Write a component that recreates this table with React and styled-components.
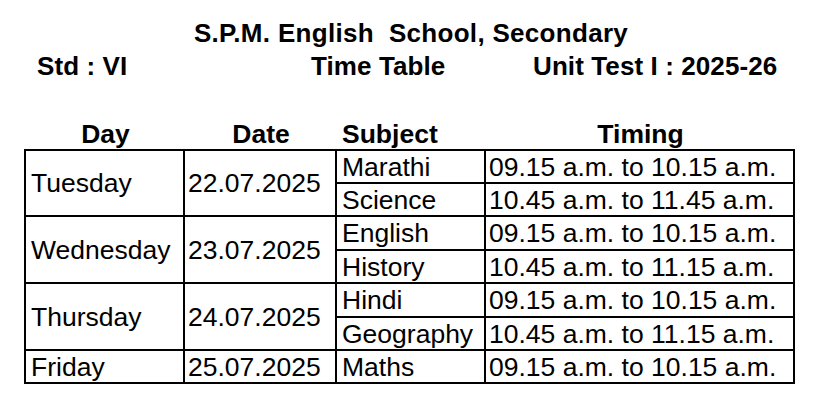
import React from "react";
import styled, { createGlobalStyle } from "styled-components";

const GlobalStyle = createGlobalStyle`
  html, body {
    margin: 0;
    padding: 0;
    background: #ffffff;
  }
  body {
    font-family: "Liberation Sans", Arial, sans-serif;
    color: #000000;
  }
`;

const Page = styled.div`
  width: 816px;
  height: 406px;
  padding-top: 18px;
  box-sizing: border-box;
  overflow: hidden;
`;

const Title = styled.h1`
  margin: 0;
  padding-left: 6px;
  font-size: 26px;
  line-height: 30px;
  font-weight: bold;
  letter-spacing: 0.3px;
  text-align: center;
  white-space: pre;
`;

const InfoLine = styled.div`
  display: grid;
  grid-template-columns: 274px 222px auto;
  margin-top: 3px;
  padding-left: 37px;
  font-size: 26px;
  line-height: 30px;
  font-weight: bold;
  letter-spacing: 0.1px;
  white-space: nowrap;
`;

const columns = "159px 152px 149px 309px";

const HeadRow = styled.div`
  display: grid;
  grid-template-columns: ${columns};
  margin: 38px 0 0 26px;
  font-size: 26.5px;
  line-height: 30px;
  font-weight: bold;
`;

const HeadCell = styled.div`
  text-align: ${(p) => p.$align || "center"};
  padding-left: ${(p) => (p.$align === "left" ? "5px" : "0")};
  white-space: nowrap;
`;

const Table = styled.div`
  display: grid;
  grid-template-columns: ${columns};
  grid-template-rows: 33px 33px 34px 33px 34px 33px 33px;
  margin-left: 24px;
  width: 771px;
  box-sizing: border-box;
  border-top: 2px solid #000;
  border-left: 2px solid #000;
  font-size: 26.5px;
  line-height: 30px;
`;

const Cell = styled.div`
  grid-column: ${(p) => p.$col};
  grid-row: span ${(p) => p.$span || 1};
  display: flex;
  align-items: center;
  box-sizing: border-box;
  padding-left: ${(p) => p.$pad}px;
  border-right: 2px solid #000;
  border-bottom: 2px solid #000;
  white-space: nowrap;
  overflow: hidden;
`;

const schedule = [
  {
    day: "Tuesday",
    date: "22.07.2025",
    papers: [
      ["Marathi", "09.15 a.m. to 10.15 a.m."],
      ["Science", "10.45 a.m. to 11.45 a.m."],
    ],
  },
  {
    day: "Wednesday",
    date: "23.07.2025",
    papers: [
      ["English", "09.15 a.m. to 10.15 a.m."],
      ["History", "10.45 a.m. to 11.15 a.m."],
    ],
  },
  {
    day: "Thursday",
    date: "24.07.2025",
    papers: [
      ["Hindi", "09.15 a.m. to 10.15 a.m."],
      ["Geography", "10.45 a.m. to 11.15 a.m."],
    ],
  },
  {
    day: "Friday",
    date: "25.07.2025",
    papers: [["Maths", "09.15 a.m. to 10.15 a.m."]],
  },
];

function TimeTable() {
  return (
    <Table>
      {schedule.map((d) => (
        <React.Fragment key={d.day}>
          <Cell $col={1} $span={d.papers.length} $pad={5}>
            {d.day}
          </Cell>
          <Cell $col={2} $span={d.papers.length} $pad={3}>
            {d.date}
          </Cell>
          {d.papers.map(([subject, timing]) => (
            <React.Fragment key={subject}>
              <Cell $col={3} $pad={5}>
                {subject}
              </Cell>
              <Cell $col={4} $pad={3}>
                {timing}
              </Cell>
            </React.Fragment>
          ))}
        </React.Fragment>
      ))}
    </Table>
  );
}

export default function App() {
  return (
    <>
      <GlobalStyle />
      <Page>
        <Title>{"S.P.M. English  School, Secondary"}</Title>
        <InfoLine>
          <span>Std : VI</span>
          <span>Time Table</span>
          <span>Unit Test I : 2025-26</span>
        </InfoLine>
        <HeadRow>
          <HeadCell>Day</HeadCell>
          <HeadCell>Date</HeadCell>
          <HeadCell $align="left">Subject</HeadCell>
          <HeadCell>Timing</HeadCell>
        </HeadRow>
        <TimeTable />
      </Page>
    </>
  );
}
